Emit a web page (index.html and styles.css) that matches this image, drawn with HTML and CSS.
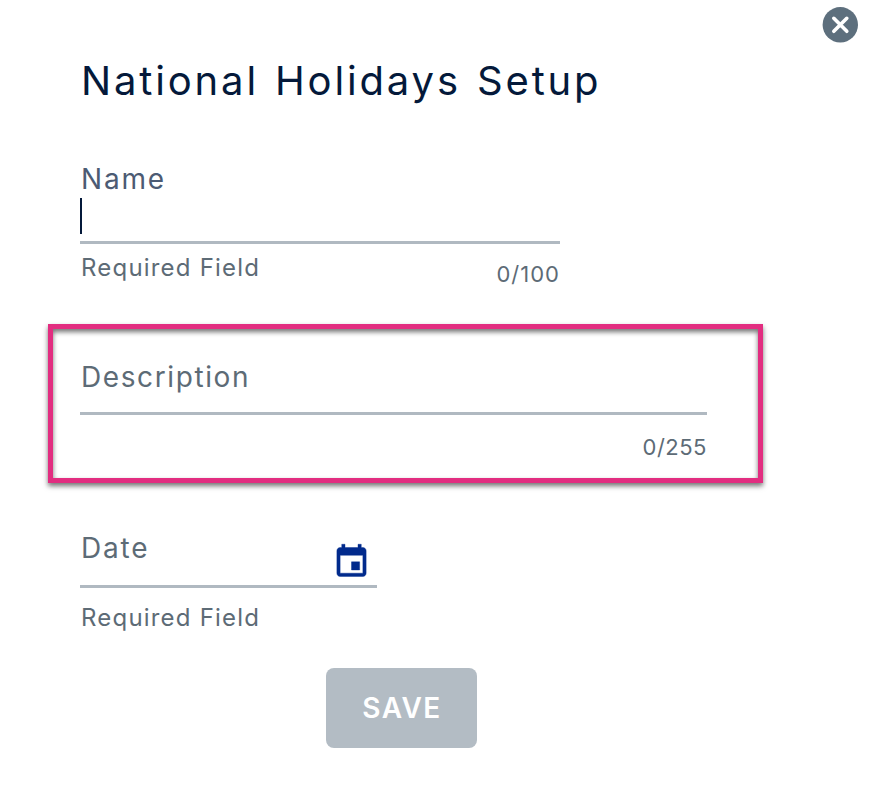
FILE: index.html
```
<!DOCTYPE html>
<html lang="en">
<head>
    <meta charset="UTF-8">
    <meta name="viewport" content="width=device-width, initial-scale=1.0">
    <title>National Holidays Setup</title>
    <link rel="stylesheet" href="styles.css">
</head>
<body>
    <div class="dialog">
        <button class="close-btn" type="button" aria-label="Close">
            <svg viewBox="0 0 36 36" width="36" height="36">
                <circle cx="18.3" cy="17.8" r="17.7" fill="#5d6f7d"/>
                <path d="M11.8 11.3l13 13M24.8 11.3l-13 13" stroke="#fff" stroke-width="3.6" stroke-linecap="round"/>
            </svg>
        </button>
        <h1>National Holidays Setup</h1>
        <form>
            <div class="field name-field">
                <div class="label active">Name</div>
                <div class="input"><i class="caret"></i></div>
                <div class="hints">
                    <span class="required">Required Field</span>
                    <span class="counter">0/100</span>
                </div>
            </div>
            <div class="highlight">
                <div class="field desc-field">
                    <div class="label">Description</div>
                    <div class="hints">
                        <span class="counter">0/255</span>
                    </div>
                </div>
            </div>
            <div class="field date-field">
                <div class="label">
                    <span>Date</span>
                    <svg class="calendar" viewBox="0 0 24 24" width="39" height="39">
                        <path fill="#012a8c" stroke="#012a8c" stroke-width="0.25" d="M17 12.2h-5v5h5v-5zM16 1.4v2H8v-2H6v2H5c-1.11 0-1.99.9-1.99 2L3 19.2c0 1.1.89 2 2 2h14c1.1 0 2-.9 2-2V5.4c0-1.1-.9-2-2-2h-1v-2h-2zm3 17.8H5v-11h14v11z"/>
                    </svg>
                </div>
                <div class="hints">
                    <span class="required">Required Field</span>
                </div>
            </div>
            <button class="save-btn" type="button">SAVE</button>
        </form>
    </div>
</body>
</html>
```
FILE: styles.css
```
body {
    margin: 0;
    background-color: #fff;
    font-family: Inter, "Liberation Sans", sans-serif;
    color: #5d6b76;
}
.dialog {
    position: relative;
    box-sizing: border-box;
    height: 798px;
    padding: 56px 113px 0 48px;
}
.close-btn {
    position: absolute;
    top: 7px;
    right: 18px;
    width: 36px;
    height: 36px;
    padding: 0;
    border: none;
    background: none;
}
.close-btn svg {
    display: block;
}
h1 {
    margin: 0 0 57px 33px;
    font-size: 40px;
    line-height: 49px;
    font-weight: 400;
    letter-spacing: 2.85px;
    word-spacing: 2px;
    color: #04193a;
    white-space: nowrap;
}
.field {
    white-space: nowrap;
}
.name-field {
    width: 480px;
    height: 162px;
    margin-left: 32px;
}
.label {
    display: flex;
    justify-content: space-between;
    padding-left: 1px;
    font-size: 28px;
    line-height: 34px;
    letter-spacing: 1.8px;
}
.label.active {
    color: #4c5b73;
}
.input {
    display: flow-root;
    height: 45px;
    border-bottom: 3px solid #b0b9c1;
}
.caret {
    display: block;
    width: 2px;
    height: 36px;
    margin-top: 2px;
    background-color: #04193a;
}
.hints {
    display: flex;
    justify-content: space-between;
}
.required {
    padding-left: 1px;
    font-size: 24px;
    line-height: 30px;
    letter-spacing: 1.2px;
}
.name-field .hints {
    padding-top: 9px;
}
.counter {
    margin-left: auto;
    font-size: 22px;
    line-height: 30px;
    letter-spacing: 0.5px;
}
.name-field .counter {
    margin-top: 6px;
    letter-spacing: 1px;
}
.highlight {
    box-sizing: border-box;
    width: 715px;
    height: 159px;
    padding: 31px 51px 0 27px;
    border: 5px solid #e22d80;
    box-shadow: 0 3px 5px rgba(0,0,0,0.55), inset 0 3px 5px rgba(0,0,0,0.55);
}
.desc-field .label {
    height: 52px;
    border-bottom: 3px solid #b0b9c1;
    letter-spacing: 1.6px;
}
.desc-field .hints {
    padding-top: 17px;
}
.date-field {
    width: 297px;
    margin: 48px 0 0 32px;
}
.date-field .label {
    height: 54px;
    border-bottom: 3px solid #b0b9c1;
}
.calendar {
    margin: 11px 6px 0 0;
}
.date-field .hints {
    padding-top: 15px;
}
.save-btn {
    display: block;
    width: 151px;
    height: 80px;
    margin: 35px 0 0 278px;
    padding: 0 0 1px 1px;
    border: none;
    border-radius: 8px;
    background-color: #b3bcc4;
    color: #fff;
    font-family: inherit;
    font-size: 28px;
    font-weight: 600;
    letter-spacing: 1.5px;
}
```
